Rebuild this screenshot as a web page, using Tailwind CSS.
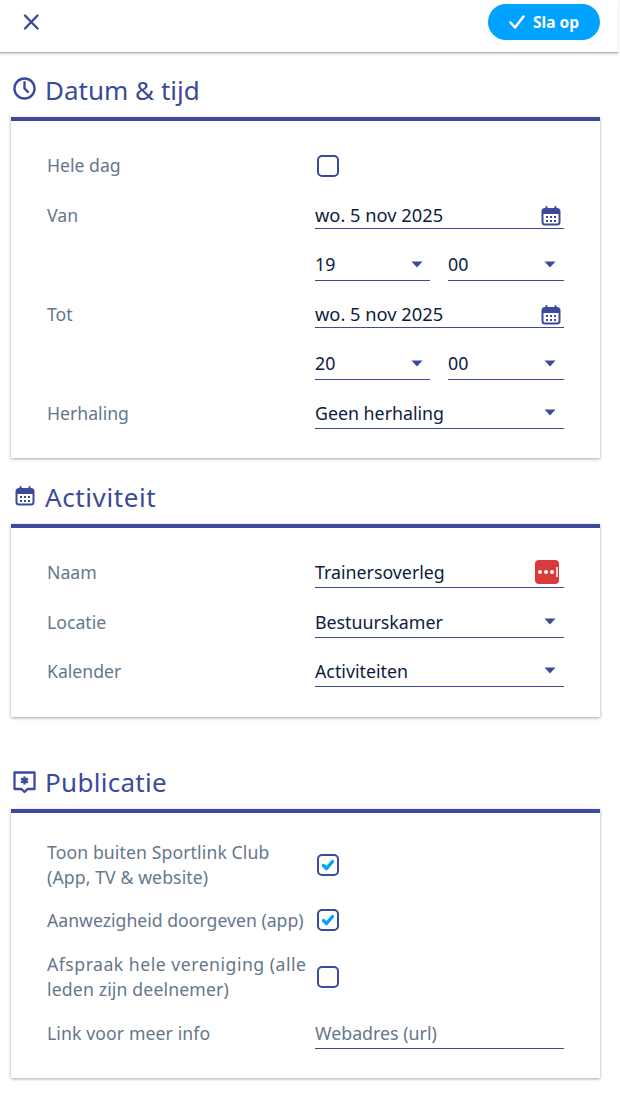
<!DOCTYPE html>
<html lang="nl">
<head>
    <meta charset="UTF-8">
    <meta name="viewport" content="width=device-width, initial-scale=1.0">
    <title>Activiteit</title>
    <script src="https://cdn.jsdelivr.net/npm/@tailwindcss/browser@4"></script>
</head>
<body class="bg-white font-['Noto_Sans',sans-serif] text-[17.8px] leading-[24px] text-[#0d1b3e] h-[1093px] overflow-hidden">

    <!-- Topbar -->
    <header class="w-[618px] h-[53px] border-b border-[#b0b0b0] shadow-[0_1px_2px_rgba(0,0,0,0.2)] flex items-center justify-between pl-[23px] pr-[18px] pb-[8px]">
        <button class="w-[16px] h-[16px] block">
            <svg viewBox="0 0 16 16" class="w-[16px] h-[16px]" fill="none" stroke="#3d4a9a" stroke-width="2.400" stroke-linecap="round"><path d="M2 1.500 14.500 14.500M14.500 1.500 2 14.500"/></svg>
        </button>
        <button class="w-[112px] h-[36px] rounded-full bg-[#00a2ff] text-white flex items-center justify-center gap-[8px] text-[15.500px] font-bold">
            <svg viewBox="0 0 16 16" class="w-[16px] h-[16px]" fill="none" stroke="#fff" stroke-width="2.500" stroke-linecap="round" stroke-linejoin="round"><path d="M1.500 8.500 6 13.500 14.500 2.500"/></svg>
            Sla op
        </button>
    </header>

    <!-- Datum & tijd -->
    <section class="w-[589px] ml-[11px]">
        <div class="h-[64px] flex items-center gap-[9px] pt-[10px]">
            <svg viewBox="0 0 24 24" class="w-[23px] h-[23px] ml-[2px] -mt-[3px]" fill="none" stroke="#3d4a9a" stroke-width="2.500" stroke-linecap="round" stroke-linejoin="round"><circle cx="12" cy="12" r="10.500"/><path d="M12 5.500V12l3.500 3.500"/></svg>
            <h2 class="text-[26px] leading-[32px] text-[#3d4a9a] font-normal">Datum &amp; tijd</h2>
        </div>
        <div class="border-t-[4px] border-[#3d4a9a] shadow-[0_1px_3px_rgba(0,0,0,0.35)] h-[341px] pt-[20px] pl-[36px] pr-[36px] flex flex-col">
            <div class="h-[49.500px] flex items-center">
                <div class="w-[268px] text-[#64778c] text-[17.650px] pb-[2px]">Hele dag</div>
                <span class="w-[22px] h-[22px] rounded-[5px] border-2 border-[#3d4a9a] ml-[2px]"></span>
            </div>
            <div class="h-[49.500px] flex">
                <div class="w-[268px] text-[#64778c] text-[17.650px] pt-[12px]">Van</div>
                <div class="w-[249px] h-[37px] border-b border-[#3d4a9a] flex items-end justify-between pb-[1px] mt-[1px] text-[18.300px]">
                    <span>wo. 5 nov 2025</span>
                    <svg viewBox="0 0 20 20" class="w-[20px] h-[20px] mb-[1px] mr-[3px]"><use href="#cal"/></svg>
                </div>
            </div>
            <div class="h-[49.500px] flex">
                <div class="w-[268px]"></div>
                <div class="w-[115px] h-[39px] border-b border-[#3d4a9a] flex items-end justify-between pb-[4px] mr-[18px] mt-[2px]">
                    <span>19</span><svg viewBox="0 0 12 7" class="w-[12px] h-[7px] mb-[8px] mr-[7px]"><use href="#caret"/></svg>
                </div>
                <div class="w-[116px] h-[39px] border-b border-[#3d4a9a] flex items-end justify-between pb-[4px] mt-[2px]">
                    <span>00</span><svg viewBox="0 0 12 7" class="w-[12px] h-[7px] mb-[8px] mr-[8px]"><use href="#caret"/></svg>
                </div>
            </div>
            <div class="h-[49.500px] flex">
                <div class="w-[268px] text-[#64778c] text-[17.650px] pt-[12px]">Tot</div>
                <div class="w-[249px] h-[37px] border-b border-[#3d4a9a] flex items-end justify-between pb-[1px] mt-[1px] text-[18.300px]">
                    <span>wo. 5 nov 2025</span>
                    <svg viewBox="0 0 20 20" class="w-[20px] h-[20px] mb-[1px] mr-[3px]"><use href="#cal"/></svg>
                </div>
            </div>
            <div class="h-[49.500px] flex">
                <div class="w-[268px]"></div>
                <div class="w-[115px] h-[39px] border-b border-[#3d4a9a] flex items-end justify-between pb-[4px] mr-[18px] mt-[2px]">
                    <span>20</span><svg viewBox="0 0 12 7" class="w-[12px] h-[7px] mb-[8px] mr-[7px]"><use href="#caret"/></svg>
                </div>
                <div class="w-[116px] h-[39px] border-b border-[#3d4a9a] flex items-end justify-between pb-[4px] mt-[2px]">
                    <span>00</span><svg viewBox="0 0 12 7" class="w-[12px] h-[7px] mb-[8px] mr-[8px]"><use href="#caret"/></svg>
                </div>
            </div>
            <div class="h-[49.500px] flex">
                <div class="w-[268px] text-[#64778c] text-[17.650px] pt-[12px]">Herhaling</div>
                <div class="w-[249px] h-[39px] border-b border-[#3d4a9a] flex items-end justify-between pb-[3px] mt-[1px]">
                    <span>Geen herhaling</span><svg viewBox="0 0 12 7" class="w-[12px] h-[7px] mb-[9px] mr-[8px]"><use href="#caret"/></svg>
                </div>
            </div>
        </div>
    </section>

    <!-- Activiteit -->
    <section class="w-[589px] ml-[11px]">
        <div class="h-[66px] flex items-center gap-[8px] pt-[12px]">
            <svg viewBox="0 0 20 20" class="w-[20px] h-[20px] ml-[4px] -mt-[2px]"><use href="#cal"/></svg>
            <h2 class="text-[26px] leading-[32px] text-[#3d4a9a] font-normal ml-[2px] tracking-[0.6px] -mt-[1px]">Activiteit</h2>
        </div>
        <div class="border-t-[4px] border-[#3d4a9a] shadow-[0_1px_3px_rgba(0,0,0,0.35)] h-[193px] pt-[20px] pl-[36px] pr-[36px] flex flex-col">
            <div class="h-[49.500px] flex">
                <div class="w-[268px] text-[#64778c] text-[17.650px] pt-[12px]">Naam</div>
                <div class="w-[249px] h-[40px] border-b border-[#3d4a9a] flex items-end justify-between pb-[3px]">
                    <span>Trainersoverleg</span>
                    <span class="w-[24px] h-[24px] rounded-[4px] bg-[#d93a3a] flex items-center gap-[2px] pl-[3px] mr-[5px]">
                        <i class="w-[4px] h-[4px] rounded-full bg-white"></i><i class="w-[4px] h-[4px] rounded-full bg-white"></i><i class="w-[4px] h-[4px] rounded-full bg-white"></i><i class="w-[2px] h-[10px] bg-[#f8d0d0]"></i>
                    </span>
                </div>
            </div>
            <div class="h-[49.500px] flex">
                <div class="w-[268px] text-[#64778c] text-[17.650px] pt-[12px]">Locatie</div>
                <div class="w-[249px] h-[40px] border-b border-[#3d4a9a] flex items-end justify-between pb-[3px]">
                    <span>Bestuurskamer</span><svg viewBox="0 0 12 7" class="w-[12px] h-[7px] mb-[9px] mr-[8px]"><use href="#caret"/></svg>
                </div>
            </div>
            <div class="h-[49.500px] flex">
                <div class="w-[268px] text-[#64778c] text-[17.650px] pt-[12px]">Kalender</div>
                <div class="w-[249px] h-[40px] border-b border-[#3d4a9a] flex items-end justify-between pb-[3px]">
                    <span>Activiteiten</span><svg viewBox="0 0 12 7" class="w-[12px] h-[7px] mb-[9px] mr-[8px]"><use href="#caret"/></svg>
                </div>
            </div>
        </div>
    </section>

    <!-- Publicatie -->
    <section class="w-[589px] ml-[11px]">
        <div class="h-[92px] flex items-center gap-[9px] pt-[38px]">
            <svg viewBox="0 0 24 24" class="w-[24px] h-[24px] ml-[1px]" fill="none" stroke="#3d4a9a" stroke-width="2.300" stroke-linejoin="round"><path d="M2.500 2.500h20v16.500h-7l-3 3-3-3h-7z"/><path d="M12.500 6.500v8M9 8.500l7 4M16 8.500l-7 4" stroke-width="2.400"/></svg>
            <h2 class="text-[26px] leading-[32px] text-[#3d4a9a] font-normal tracking-[0.3px]">Publicatie</h2>
        </div>
        <div class="border-t-[4px] border-[#3d4a9a] shadow-[0_1px_3px_rgba(0,0,0,0.35)] h-[269px] pt-[25px] pl-[36px] pr-[36px] flex flex-col">
            <div class="h-[54px] flex items-center">
                <div class="w-[268px] text-[#64778c] text-[17.650px] leading-[25px] tracking-[0.1px]">Toon buiten Sportlink Club<br>(App, TV &amp; website)</div>
                <span class="w-[22px] h-[22px] rounded-[5px] border-2 border-[#3d4a9a] ml-[2px] flex items-center justify-center">
                    <svg viewBox="0 0 14 14" class="w-[14px] h-[14px]" fill="none" stroke="#00a2ff" stroke-width="3.400" stroke-linecap="round" stroke-linejoin="round"><path d="M2.500 7.500 5.500 10.500 11.500 3.500"/></svg>
                </span>
            </div>
            <div class="h-[54px] mt-[1px] flex items-center">
                <div class="w-[268px] text-[#64778c] text-[17.650px]">Aanwezigheid doorgeven (app)</div>
                <span class="w-[22px] h-[22px] rounded-[5px] border-2 border-[#3d4a9a] ml-[2px] flex items-center justify-center">
                    <svg viewBox="0 0 14 14" class="w-[14px] h-[14px]" fill="none" stroke="#00a2ff" stroke-width="3.400" stroke-linecap="round" stroke-linejoin="round"><path d="M2.500 7.500 5.500 10.500 11.500 3.500"/></svg>
                </span>
            </div>
            <div class="h-[58px] mt-[1px] flex items-center">
                <div class="w-[268px] text-[#64778c] text-[17.650px] leading-[25px] -mt-[1px] whitespace-nowrap"><span class="tracking-[0.5px]">Afspraak hele vereniging (alle</span><br><span class="tracking-[0.15px]">leden zijn deelnemer)</span></div>
                <span class="w-[22px] h-[22px] rounded-[5px] border-2 border-[#3d4a9a] ml-[2px]"></span>
            </div>
            <div class="h-[50px] flex">
                <div class="w-[268px] text-[#64778c] text-[17.650px] pt-[15px] tracking-[0.1px]">Link voor meer info</div>
                <div class="w-[249px] h-[43px] border-b border-[#3d4a9a] flex items-end text-[#64778c] pb-[3px]">
                    <span>Webadres (url)</span>
                </div>
            </div>
        </div>
    </section>

    <svg class="hidden">
        <symbol id="cal" viewBox="0 0 20 20">
            <rect x="1.500" y="3" width="17" height="15.500" rx="2.500" fill="none" stroke="#3d4a9a" stroke-width="2"/>
            <path d="M1.500 5.500a2.500 2.500 0 0 1 2.500-2.500h12a2.500 2.500 0 0 1 2.500 2.500V8h-17z" fill="#3d4a9a"/>
            <path d="M5.500 1v3.500M14.500 1v3.500" stroke="#3d4a9a" stroke-width="2" stroke-linecap="round"/>
            <path d="M5 10h2v2H5zM9 10h2v2H9zM13 10h2v2h-2zM5 14h2v2H5zM9 14h2v2H9zM13 14h2v2h-2z" fill="#3d4a9a"/>
        </symbol>
        <symbol id="caret" viewBox="0 0 12 7">
            <path d="M0.500 0.500h11L6 6.500z" fill="#3d4a9a"/>
        </symbol>
    </svg>
</body>
</html>
